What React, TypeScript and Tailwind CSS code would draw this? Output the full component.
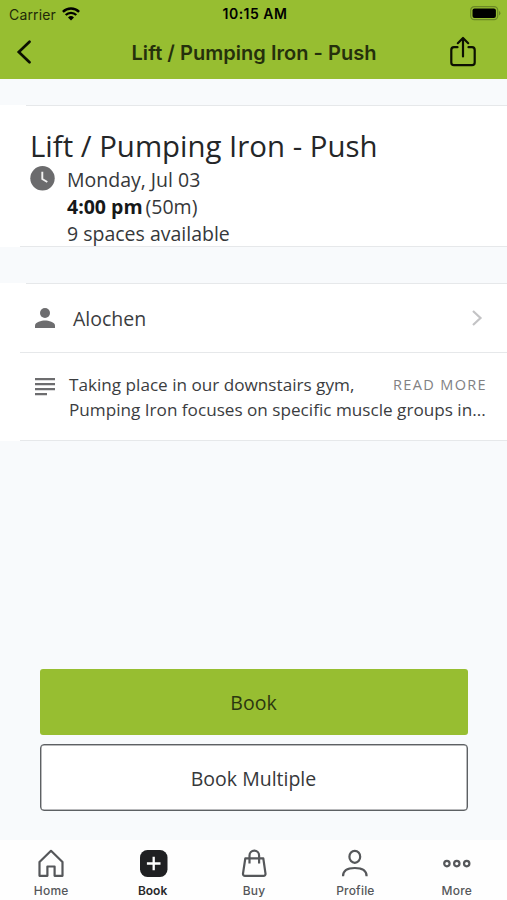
import type { ReactNode } from 'react'

type Tab = {
  label: string
  icon: ReactNode
  active?: boolean
}

function StatusBar() {
  return (
    <div className="grid h-7 grid-cols-3 items-center pl-[9px] pr-[6px] text-black">
      <div className="flex items-center gap-[6px]">
        <span className="text-[14px] tracking-[0.15px] text-[#1f2a08]">Carrier</span>
        <svg className="-mt-px" width="18" height="14" viewBox="0 0 18 14" fill="none" stroke="currentColor">
          <path d="M0.9 4.9a11.5 11.5 0 0 1 16.2 0" strokeWidth="2.4" />
          <path d="M3.7 8a7.5 7.5 0 0 1 10.6 0" strokeWidth="2.3" />
          <path d="M9 13.6 6 10.5a4.3 4.3 0 0 1 6 0z" fill="currentColor" stroke="none" />
        </svg>
      </div>
      <span className="-mt-px whitespace-nowrap text-center text-[14px] font-semibold tracking-[0.5px]">
        10:15 AM
      </span>
      <svg className="-mt-[2px] justify-self-end" width="31" height="15" viewBox="0 0 31 15">
        <rect x="0.7" y="0.7" width="27" height="13" rx="3.6" fill="none" stroke="#6b8826" strokeWidth="1.2" />
        <rect x="2.5" y="2.5" width="23.4" height="9.4" rx="2" fill="black" />
        <path d="M29 5a2.4 2.4 0 0 1 0 4.4z" fill="#6b8826" />
      </svg>
    </div>
  )
}

function Header() {
  return (
    <header className="h-[79px] shrink-0 bg-[#97be31] font-[Inter,sans-serif]">
      <StatusBar />
      <div className="grid h-12 grid-cols-[60px_1fr_60px] items-center">
        <button type="button" aria-label="Back" className="pl-4">
          <svg width="16" height="24" viewBox="0 0 16 24" fill="none" stroke="#0c1002" strokeWidth="2.7">
            <path d="M13.5 1.7 2.8 12l10.7 10.3" strokeLinecap="round" />
          </svg>
        </button>
        <h1 className="whitespace-nowrap pl-px pt-px text-center text-[20px] font-semibold tracking-[0.03px] text-[#25300c]">
          Lift / Pumping Iron - Push
        </h1>
        <button type="button" aria-label="Share" className="pl-[2px]">
          <svg
            width="28"
            height="32"
            viewBox="0 0 28 32"
            fill="none"
            stroke="#0c1002"
            strokeWidth="2.2"
            strokeLinecap="round"
            strokeLinejoin="round"
          >
            <path d="M8.500 11.200H5a2.700 2.700 0 0 0-2.700 2.700v12.600A2.700 2.700 0 0 0 5 29.200h18a2.700 2.700 0 0 0 2.700-2.700V13.900A2.700 2.700 0 0 0 23 11.200h-3.500" />
            <path d="M14 20.500V2.500M8.800 7.200 14 2l5.200 5.200" />
          </svg>
        </button>
      </div>
    </header>
  )
}

function Divider({ inset = 'wide' }: { inset?: 'wide' | 'narrow' }) {
  return <div className={inset === 'wide' ? 'ml-[26px] h-px bg-[#e6e8ea]' : 'ml-5 h-px bg-[#e6e8ea]'} />
}

function ClassSummary() {
  return (
    <section className="mt-[26px] h-[142px] bg-white">
      <Divider />
      <h2 className="ml-[30px] mt-[20px] whitespace-nowrap text-[29.4px] leading-[40px] text-[#242628]">
        Lift / Pumping Iron - Push
      </h2>
      <div className="ml-[30px] flex gap-3">
        <svg width="25" height="25" viewBox="0 0 25 25">
          <circle cx="12.5" cy="12.3" r="12.2" fill="#6b6b6d" />
          <path d="M12.300 5.800V13l5 3" fill="none" stroke="#f1f1f1" strokeWidth="1.9" />
        </svg>
        <div className="text-[19.5px] leading-[27px] text-[#36383a]">
          <p>Monday, Jul 03</p>
          <p className="whitespace-nowrap">
            <strong className="font-bold text-[#161819]">4:00 pm</strong>
            <span className="ml-[3px]">(50m)</span>
          </p>
          <p className="h-[26px]">9 spaces available</p>
        </div>
      </div>
      <Divider inset="narrow" />
    </section>
  )
}

function ClassDetails() {
  return (
    <section className="mt-[36px] bg-white">
      <Divider />
      <div className="flex h-[68px] items-center pl-[34px] pr-[24px]">
        <svg width="22" height="22" viewBox="0 0 22 22" fill="#6d6d6f">
          <circle cx="11" cy="6" r="5" />
          <path d="M1 21v-2.500c0-3.300 6.600-5 10-5s10 1.700 10 5V21z" />
        </svg>
        <span className="ml-[17px] pt-[2px] text-[19.5px] text-[#3b3d3f]">Alochen</span>
        <svg
          className="ml-auto"
          width="12"
          height="18"
          viewBox="0 0 12 18"
          fill="none"
          stroke="#c3c3c5"
          strokeWidth="2.2"
        >
          <path d="m2 2 7.500 7L2 16" />
        </svg>
      </div>
      <Divider inset="narrow" />
      <div className="flex h-[87px] pl-[35px] pt-[19px]">
        <svg className="mt-[6px]" width="20" height="18" viewBox="0 0 20 18" fill="#6d6d6f">
          <path d="M0 0h20v2.300H0zM0 5h20v2.300H0zM0 10h20v2.300H0zM0 15h12v2.300H0z" />
        </svg>
        <div className="ml-[14px] w-[418px] whitespace-nowrap text-[17.15px] leading-[25px] text-[#3b3d3f]">
          <div className="flex justify-between">
            <span>Taking place in our downstairs gym,</span>
            <button type="button" className="text-[14.5px] tracking-[1.35px] text-[#818183]">
              READ MORE
            </button>
          </div>
          <p>Pumping Iron focuses on specific muscle groups in...</p>
        </div>
      </div>
      <Divider inset="narrow" />
    </section>
  )
}

function Actions() {
  return (
    <div className="mb-[29px] mt-auto flex flex-col gap-[9px] px-[39.5px] text-[19.5px]">
      <button type="button" className="h-[66px] rounded-[3px] bg-[#97be31] pt-[2px] text-[#2b3710]">
        Book
      </button>
      <button
        type="button"
        className="h-[67px] rounded-[4px] border border-[#5d6063] bg-white pt-[2px] text-[#36383a] shadow-[inset_0_0_0_0.5px_#74777a]"
      >
        Book Multiple
      </button>
    </div>
  )
}

const tabs: Tab[] = [
  {
    label: 'Home',
    icon: <path d="M3.500 13 15 1.800l11.500 11.200V26.800h-7.900V17.500h-7.200v9.300H3.500z" />,
  },
  {
    label: 'Book',
    active: true,
    icon: (
      <>
        <rect x="2" y="1" width="27.500" height="27" rx="7.500" fill="#1f2022" stroke="none" />
        <path d="M15.700 7.700v13.600M8.900 14.500h13.600" stroke="white" strokeWidth="2.300" />
      </>
    ),
  },
  {
    label: 'Buy',
    icon: (
      <>
        <path d="M6.300 9.300h18l2.200 15.300a2 2 0 0 1-2 2.300H6a2 2 0 0 1-2-2.300z" />
        <path d="M10.500 14.500V6.500a4.800 4.800 0 0 1 9.600 0v8" />
      </>
    ),
  },
  {
    label: 'Profile',
    icon: (
      <>
        <ellipse cx="14.800" cy="7.800" rx="5.400" ry="6" />
        <path d="M3 27.200c0-5.500 4.500-8.200 11.800-8.200s11.800 2.700 11.800 8.200" />
      </>
    ),
  },
  {
    label: 'More',
    icon: (
      <>
        <circle cx="4.900" cy="14.600" r="2.700" />
        <circle cx="14.800" cy="14.600" r="2.700" />
        <circle cx="24.700" cy="14.600" r="2.700" />
      </>
    ),
  },
]

function TabBar() {
  return (
    <nav className="grid h-[60px] shrink-0 grid-cols-5 bg-[#fefefe] font-[Inter,sans-serif]">
      {tabs.map((tab) => (
        <button
          type="button"
          key={tab.label}
          className={`flex flex-col items-center pl-px pt-[9px] ${
            tab.active ? 'font-semibold text-[#28292b]' : 'font-medium tracking-[0.2px] text-[#55575a]'
          }`}
        >
          <svg
            width="30"
            height="30"
            viewBox="0 0 30 30"
            fill="none"
            stroke="currentColor"
            strokeWidth="2.2"
            strokeLinejoin="round"
          >
            {tab.icon}
          </svg>
          <span className="mt-[4px] text-[12px] leading-4">{tab.label}</span>
        </button>
      ))}
    </nav>
  )
}

export default function App() {
  return (
    <div className="flex h-screen w-full flex-col overflow-hidden bg-[#f8fafc] font-['Open_Sans',sans-serif]">
      <Header />
      <ClassSummary />
      <ClassDetails />
      <Actions />
      <TabBar />
    </div>
  )
}
